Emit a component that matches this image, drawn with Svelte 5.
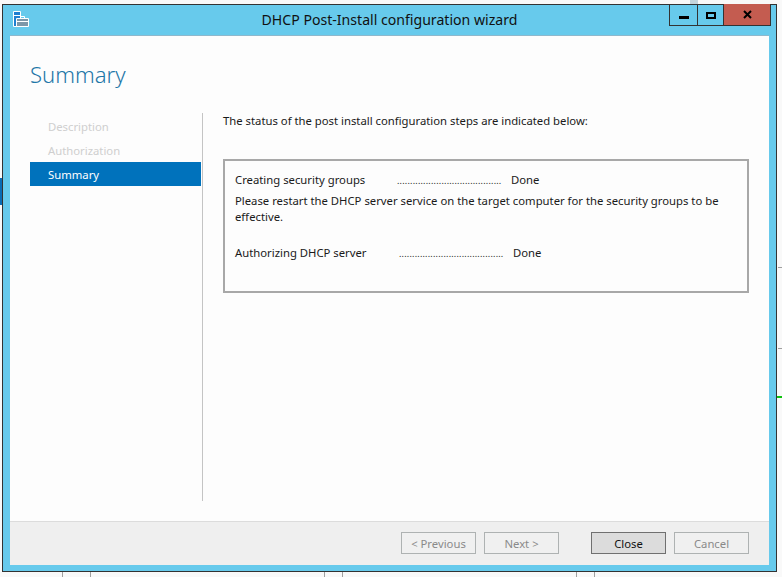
<script lang="ts">
  const steps = ['Description', 'Authorization', 'Summary'];
  const leader = '.'.repeat(40);
  const buttons = [
    { label: '< Previous', disabled: true },
    { label: 'Next >', disabled: true },
    { label: 'Close', disabled: false },
    { label: 'Cancel', disabled: true },
  ];
</script>

<div class="desktop">
  <!-- bits of the windows behind the wizard -->
  <i class="bg sel"></i>
  <i class="bg tick t1"></i>
  <i class="bg tick t2"></i>
  <i class="bg tick t3"></i>
  <i class="bg tick t4"></i>
  <i class="bg tick t5"></i>
  <i class="bg tick t6"></i>
  <i class="bg rl r1"></i>
  <i class="bg rl r2"></i>
  <i class="bg green"></i>
  <i class="bg stub"></i>

  <div class="window">
    <header class="titlebar">
      <svg class="app-icon" width="17" height="17" viewBox="0 0 17 17">
        <path d="M1.5 .5h7v15h-7z" fill="#1f7fd0" stroke="#fff" />
        <path d="M1.5 4.5h7" stroke="#fff" />
        <path d="M4.5 7.5h12v8h-12z" fill="#7d97a8" stroke="#fff" />
        <path d="M8.5 7.5v-2h4v2M5 10.5h11" fill="none" stroke="#fff" />
      </svg>
      <h1>DHCP Post-Install configuration wizard</h1>
      <div class="controls">
        <span class="ctl min"><b></b></span>
        <span class="ctl max"><b></b></span>
        <span class="ctl close">
          <svg width="9" height="9" viewBox="0 0 9 9"><path d="M1 1l7 7M8 1l-7 7" stroke="#000" stroke-width="2" /></svg>
        </span>
      </div>
    </header>

    <div class="client">
      <main class="content">
        <h2>Summary</h2>
        <div class="columns">
          <nav class="steps">
            {#each steps as step, i}
              <div class="step" class:active={i === 2}>{step}</div>
            {/each}
          </nav>
          <section class="panel">
            <p class="intro">The status of the post install configuration steps are indicated below:</p>
            <div class="status">
              <div class="row">
                <span class="name">Creating security groups</span>
                <span class="dots">{leader}</span>
                <span>Done</span>
              </div>
              <p class="note">Please restart the DHCP server service on the target computer for the security groups to be effective.</p>
              <div class="row second">
                <span class="name">Authorizing DHCP server</span>
                <span class="dots">{leader}</span>
                <span>Done</span>
              </div>
            </div>
          </section>
        </div>
      </main>
      <footer class="footer">
        {#each buttons as b}
          <button class:primary={!b.disabled} disabled={b.disabled}>{b.label}</button>
        {/each}
      </footer>
    </div>
  </div>
</div>

<style>
  :global(body) {
    margin: 0;
    background: #f9f9f9;
  }
  .desktop {
    position: relative;
    width: 782px;
    height: 577px;
    overflow: hidden;
    padding: 4px 0 0 2px;
    box-sizing: border-box;
    font-family: 'Noto Sans', 'Open Sans', sans-serif;
    font-size: 11.3px;
    color: #1a1a1a;
  }
  .bg {
    position: absolute;
    display: block;
  }
  .sel {
    left: 0;
    top: 178px;
    width: 2px;
    height: 27px;
    background: #0a6cb4;
  }
  .tick {
    top: 572px;
    width: 1px;
    height: 5px;
    background: #a0a0a0;
  }
  .t1 { left: 62px; }
  .t2 { left: 90px; }
  .t3 { left: 324px; }
  .t4 { left: 342px; }
  .t5 { left: 576px; }
  .t6 { left: 594px; }
  .rl {
    left: 778px;
    width: 4px;
    height: 1px;
    background: #a0a0a0;
  }
  .r1 { top: 267px; }
  .r2 { top: 348px; }
  .green {
    left: 777px;
    top: 396px;
    width: 5px;
    height: 2px;
    background: #0fc30f;
  }
  .stub {
    left: 690px;
    top: 0;
    width: 8px;
    height: 4px;
    background: #c4d5dc;
  }
  .window {
    position: relative;
    width: 775px;
    height: 568px;
    box-sizing: border-box;
    border: 1px solid #333;
    background: #67caec;
    display: flex;
    flex-direction: column;
  }
  .titlebar {
    height: 30px;
    flex: none;
    display: flex;
    align-items: flex-start;
    position: relative;
  }
  .app-icon {
    margin: 6px 0 0 9px;
  }
  h1 {
    position: absolute;
    left: 0;
    right: 0;
    top: 5px;
    margin: 0;
    text-align: center;
    font-size: 14.1px;
    font-weight: 400;
    line-height: 20px;
    color: #111;
  }
  .controls {
    position: absolute;
    top: -1px;
    right: 5px;
    display: flex;
    height: 21px;
    border: 1px solid #333;
    border-top: 0;
  }
  .ctl {
    display: flex;
    align-items: center;
    justify-content: center;
    box-sizing: border-box;
  }
  .min {
    width: 28px;
    border-right: 1px solid #333;
  }
  .min b {
    width: 10px;
    height: 3px;
    background: #000;
    margin-top: 6px;
  }
  .max {
    width: 26px;
    border-right: 1px solid #333;
  }
  .max b {
    width: 10px;
    height: 7px;
    box-sizing: border-box;
    border: 2px solid #000;
    margin-top: 1px;
  }
  .close {
    width: 46px;
    background: #c45c50;
  }
  .client {
    flex: 1;
    margin: 0 7px 6px 7px;
    background: #fdfdfd;
    border-top: 1px solid #8fb8cc;
    display: flex;
    flex-direction: column;
    min-height: 0;
  }
  .content {
    flex: 1;
    padding: 0 20px 0 20px;
    min-height: 0;
    display: flex;
    flex-direction: column;
  }
  h2 {
    margin: 22px 0 0;
    font-size: 22.1px;
    line-height: 32px;
    font-weight: 300;
    color: #1f77a8;
    height: 55px;
  }
  .columns {
    display: flex;
    height: 388px;
  }
  .steps {
    width: 171px;
    padding-top: 1px;
    flex: none;
  }
  .step {
    height: 24px;
    line-height: 26px;
    padding-left: 18px;
    color: #cfcfcf;
  }
  .step.active {
    background: #0072bc;
    color: #fff;
  }
  .panel {
    flex: 1;
    margin-left: 1px;
    border-left: 1px solid #c4c4c4;
    padding-left: 20px;
  }
  .intro {
    margin: 0;
    line-height: 16px;
  }
  .status {
    box-sizing: border-box;
    width: 526px;
    height: 134px;
    margin-top: 30px;
    border: 2px solid #a8a8a8;
    padding: 10px 10px;
  }
  .row {
    display: flex;
    line-height: 18px;
  }
  .name {
    width: 162px;
  }
  .second .name {
    width: 164px;
  }
  .dots {
    font-size: 9px;
    width: 114px;
    letter-spacing: 0.2px;
    padding-top: 1px;
  }
  .note {
    margin: 3px 0 0;
    line-height: 16px;
  }
  .second {
    margin-top: 19px;
  }
  .footer {
    height: 44px;
    flex: none;
    box-sizing: border-box;
    border-top: 1px solid #dcdcdc;
    background: #efefef;
    display: flex;
    justify-content: flex-end;
    align-items: flex-start;
    padding: 10px 20px 0 0;
    gap: 8px;
  }
  button {
    width: 75px;
    height: 22px;
    box-sizing: border-box;
    padding: 0;
    background: #f0f0f0;
    border: 1px solid #aeb2b2;
    color: #8a8a8a;
    font: inherit;
  }
  button.primary {
    background: #dcdcdc;
    border-color: #707070;
    color: #111;
    margin-left: 24px;
  }
</style>
